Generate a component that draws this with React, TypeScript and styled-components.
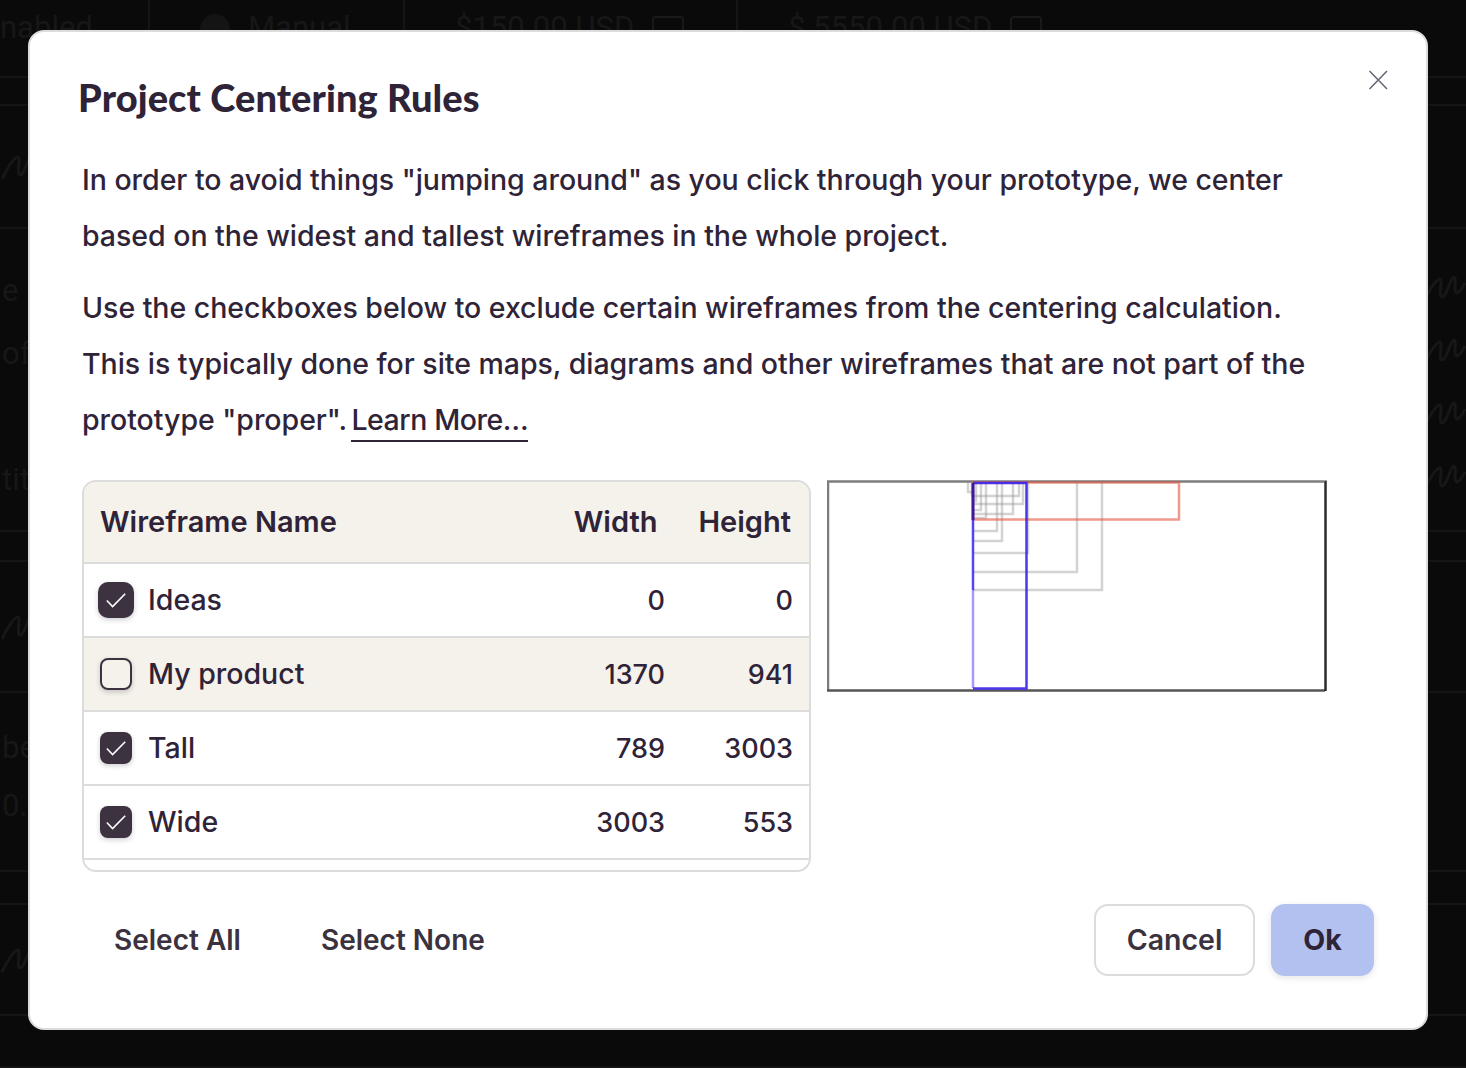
import styled, { createGlobalStyle } from "styled-components";

const TEXT = "#2f2338";
const BUTTON_TEXT = "#3b3240";
const LINE = "#dcdcdc";
const BEIGE = "#f5f1eb";
const GHOST = "#171717";

const wireframes = [
  { name: "Ideas", width: 0, height: 0, checked: true, focused: true },
  { name: "My product", width: 1370, height: 941, checked: false, shaded: true },
  { name: "Tall", width: 789, height: 3003, checked: true },
  { name: "Wide", width: 3003, height: 553, checked: true },
];

// right, bottom of the small grey frames in the preview
const greyFrames = [
  [275, 110],
  [250, 92],
  [201, 73],
  [175, 61],
  [170, 51],
  [159, 38],
  [154, 30],
  [149, 21],
  [145, 15],
  [141, 12],
  [192, 16],
  [196, 24],
  [186, 34],
];

const backgroundRows = [
  { height: 78, top: true },
  { height: 28 },
  { height: 123, pad: 0, lh: 0, scribbles: 1 },
  { height: 303, pad: 30, lh: 63, labels: ["e", "of", "", "tity"], scribbles: 4 },
  { height: 30 },
  { height: 131, scribbles: 1 },
  { height: 179, pad: 26, lh: 58, labels: ["be", "0."] },
  { height: 33 },
  { height: 111, scribbles: 1 },
  { height: 52 },
];

function Scribble() {
  return (
    <svg width="44" height="36" viewBox="0 0 44 36" fill="none">
      <path
        d="M2 30C8 18 14 8 18 8c3 0 -2 18 2 18 5 0 8 -20 12 -20 3 0 -1 16 3 16 3 0 6 -6 8 -10"
        stroke={GHOST}
        strokeWidth="3"
      />
    </svg>
  );
}

function Check() {
  return (
    <svg width="20" height="20" viewBox="0 0 20 20" fill="none">
      <path d="M0.8 10.5L6.6 16.5L19.2 3.8" stroke="#fff" strokeWidth="1.6" />
    </svg>
  );
}

function Preview() {
  return (
    <PreviewFrame width="500" height="212" viewBox="0 0 500 212" fill="none">
      <rect x="0" y="0" width="500" height="212" fill="#fff" />
      <path d="M1 210V1.5H497" stroke="#7d7d7d" strokeWidth="2.5" />
      <path d="M0 210.5H498" stroke="#555" strokeWidth="2.5" />
      <path d="M498.5 0.5V211" stroke="#2b2b2b" strokeWidth="2.5" />
      {greyFrames.map(([r, b]) => (
        <path
          key={`${r}-${b}`}
          d={`M146 ${b}H${r}V2`}
          stroke="#8c8c8c"
          strokeOpacity="0.38"
          strokeWidth="2.5"
        />
      ))}
      <rect x="146" y="2.5" width="206" height="37" stroke="#e2553f" strokeOpacity="0.6" strokeWidth="2.5" />
      <path d="M146 3H199.5V208.5H146" stroke="#3a22f0" strokeOpacity="0.9" strokeWidth="2.5" />
      <path d="M146 3V40" stroke="#3b1a9c" strokeWidth="3" />
      <path d="M146 40V110" stroke="#3a22f0" strokeOpacity="0.85" strokeWidth="2.5" />
      <path d="M146 110V208" stroke="#3a22f0" strokeOpacity="0.45" strokeWidth="2.5" />
    </PreviewFrame>
  );
}

export default function App() {
  return (
    <>
      <GlobalStyle />
      <Backdrop>
        {backgroundRows.map((row, i) => (
          <BackRow key={i} $height={row.height}>
            {row.labels && (
              <BackLabels $pad={row.pad} $lh={row.lh}>
                {row.labels.map((label, j) => (
                  <BackLabel key={j}>{label}</BackLabel>
                ))}
              </BackLabels>
            )}
            {row.top && (
              <>
                <BackLabels $pad={8} $lh={40}>nabled</BackLabels>
                <BackCell $width={255}>
                  <GhostCircle />
                  Manual
                </BackCell>
                <BackCell $width={333}>
                  $150.00 USD
                  <GhostInfo />
                </BackCell>
                <BackCell $width={333}>
                  $ 5550.00 USD
                  <GhostInfo />
                </BackCell>
              </>
            )}
            {!row.labels && row.scribbles && <Scribble />}
            {row.labels && row.scribbles && (
              <RightScribbles>
                {Array.from({ length: row.scribbles }).map((_, j) => (
                  <Scribble key={j} />
                ))}
              </RightScribbles>
            )}
          </BackRow>
        ))}
      </Backdrop>
      <Modal>
        <Title>Project Centering Rules</Title>
        <CloseButton aria-label="Close">
          <svg width="22" height="22" viewBox="0 0 22 22" fill="none">
            <path d="M2.5 2L20 20M20 2L2.5 20" stroke="#6f6776" strokeWidth="1.6" />
          </svg>
        </CloseButton>
        <Paragraph>
          In order to avoid things "jumping around" as you click through your prototype, we center
          <br />
          based on the widest and tallest wireframes in the whole project.
        </Paragraph>
        <Paragraph>
          Use the checkboxes below to exclude certain wireframes from the centering calculation.
          <br />
          This is typically done for site maps, diagrams and other wireframes that are not part of the
          <br />
          prototype "proper". <LearnMore href="#">Learn More…</LearnMore>
        </Paragraph>
        <Content>
          <Table>
            <HeaderRow>
              <HeaderName>Wireframe Name</HeaderName>
              <HeaderWidth>Width</HeaderWidth>
              <HeaderHeight>Height</HeaderHeight>
            </HeaderRow>
            {wireframes.map((w) => (
              <Row key={w.name} $shaded={w.shaded}>
                <NameCell>
                  <CheckSlot>
                    <CheckBox $checked={w.checked} $focused={w.focused}>
                      {w.checked && <Check />}
                    </CheckBox>
                  </CheckSlot>
                  <Name>{w.name}</Name>
                </NameCell>
                <Num>{w.width}</Num>
                <Num>{w.height}</Num>
              </Row>
            ))}
          </Table>
          <Preview />
        </Content>
        <Footer>
          <TextButton>Select All</TextButton>
          <TextButton>Select None</TextButton>
          <Spacer />
          <CancelButton>Cancel</CancelButton>
          <OkButton>Ok</OkButton>
        </Footer>
      </Modal>
    </>
  );
}

const GlobalStyle = createGlobalStyle`
  html, body {
    margin: 0;
    height: 100%;
    background: #0a0a0a;
    overflow: hidden;
  }
  * {
    box-sizing: border-box;
  }
`;

const Backdrop = styled.div`
  height: 1068px;
  background: #0a0a0a;
  overflow: hidden;
  font-family: "Roboto", sans-serif;
  font-size: 31px;
  color: ${GHOST};
`;

const BackRow = styled.div<{ $height: number }>`
  height: ${(p) => p.$height}px;
  border-bottom: 2px solid #151515;
  display: flex;
  align-items: center;
  justify-content: flex-start;
  position: relative;
`;

const BackLabels = styled.div<{ $pad?: number; $lh?: number }>`
  width: 148px;
  height: 100%;
  flex: none;
  padding-top: ${(p) => p.$pad ?? 0}px;
  line-height: ${(p) => p.$lh ?? 40}px;
`;

const BackLabel = styled.div`
  height: 1lh;
  padding-left: 2px;
`;

const BackCell = styled.div<{ $width: number }>`
  width: ${(p) => p.$width}px;
  height: 100%;
  padding: 8px 0 0 50px;
  border-left: 2px solid #151515;
  display: flex;
  align-items: flex-start;
  gap: 18px;
  line-height: 40px;
  white-space: nowrap;
`;

const GhostCircle = styled.span`
  flex: none;
  width: 30px;
  height: 30px;
  margin-top: 6px;
  border-radius: 50%;
  background: #141414;
`;

const GhostInfo = styled.span`
  flex: none;
  width: 32px;
  height: 30px;
  margin-top: 8px;
  border: 2px solid #1a1a1a;
  border-radius: 4px;
`;

const RightScribbles = styled.div`
  margin-left: auto;
  height: 100%;
  padding-top: 42px;
  display: flex;
  flex-direction: column;
  gap: 27px;
`;

const Modal = styled.div`
  position: absolute;
  left: 28px;
  top: 30px;
  width: 1400px;
  height: 1000px;
  padding: 42px 52px 0;
  background: #fff;
  border: 2px solid ${LINE};
  border-radius: 16px;
  font-family: "Inter", "Noto Sans", sans-serif;
  color: ${TEXT};
`;

const Title = styled.h1`
  margin: 0 0 32px -4px;
  font-family: "Lato", sans-serif;
  font-size: 38px;
  line-height: 46px;
  font-weight: 900;
  letter-spacing: 0.1px;
`;

const CloseButton = styled.button`
  position: absolute;
  right: 37px;
  top: 37px;
  width: 22px;
  height: 22px;
  padding: 0;
  border: 0;
  background: none;
  display: flex;
`;

const Paragraph = styled.p`
  margin: 0 0 16px;
  font-size: 28.5px;
  line-height: 56px;
  font-weight: 450;
  letter-spacing: -0.03px;
  white-space: nowrap;
`;

const LearnMore = styled.a`
  color: ${TEXT};
  text-decoration: none;
  border-bottom: 2px solid ${TEXT};
  padding-bottom: 3px;
  margin-left: -3px;
  letter-spacing: -0.45px;
`;

const Content = styled.div`
  display: flex;
  align-items: flex-start;
  gap: 16px;
  margin-top: 32px;
`;

const Table = styled.div`
  width: 729px;
  height: 392px;
  border: 2px solid ${LINE};
  border-radius: 14px;
  overflow: hidden;
`;

const HeaderRow = styled.div`
  height: 82px;
  background: ${BEIGE};
  border-bottom: 2px solid ${LINE};
  display: flex;
  align-items: center;
  padding-bottom: 2px;
  font-size: 29px;
  font-weight: 600;
`;

const HeaderName = styled.div`
  flex: 1;
  padding-left: 16px;
`;

const HeaderWidth = styled.div`
  padding-right: 41px;
`;

const HeaderHeight = styled.div`
  padding-right: 18px;
`;

const Row = styled.div<{ $shaded?: boolean }>`
  height: 74px;
  background: ${(p) => (p.$shaded ? BEIGE : "#fff")};
  border-bottom: 2px solid ${LINE};
  display: grid;
  grid-template-columns: 1fr 128px 128px;
  align-items: center;
  font-size: 28.5px;
  font-weight: 450;
  padding-right: 16px;
`;

const NameCell = styled.div`
  display: flex;
  align-items: center;
  gap: 16px;
  padding-left: 16px;
`;

const Name = styled.span`
  padding-bottom: 2px;
`;

const CheckSlot = styled.div`
  width: 32px;
  display: flex;
  justify-content: center;
`;

const CheckBox = styled.div<{ $checked?: boolean; $focused?: boolean }>`
  flex: none;
  width: ${(p) => (p.$focused ? 36 : 32)}px;
  height: ${(p) => (p.$focused ? 36 : 32)}px;
  border-radius: ${(p) => (p.$focused ? 10 : 8)}px;
  background: ${(p) => (p.$checked ? "#3d3340" : "#fff0")};
  border: ${(p) => (p.$checked ? "0" : `2px solid #3d3340`)};
  box-shadow: 0 2px 5px rgba(40, 30, 50, 0.22);
  display: flex;
  align-items: center;
  justify-content: center;
`;

const Num = styled.div`
  text-align: right;
  font-size: 27px;
`;

const PreviewFrame = styled.svg`
  display: block;
  flex: none;
  filter: blur(0.4px);
`;

const Footer = styled.div`
  display: flex;
  align-items: center;
  margin-top: 32px;
  height: 72px;
`;

const TextButton = styled.button`
  height: 72px;
  padding: 0 32px;
  margin-right: 16px;
  border: 0;
  background: none;
  color: ${BUTTON_TEXT};
  font-family: inherit;
  font-size: 28px;
  font-weight: 600;
`;

const Spacer = styled.div`
  flex: 1;
`;

const CancelButton = styled.button`
  width: 161px;
  height: 72px;
  margin-right: 16px;
  padding: 0 0 2px;
  border: 2px solid ${LINE};
  border-radius: 14px;
  background: #fff;
  color: ${BUTTON_TEXT};
  font-family: inherit;
  font-size: 28.5px;
  font-weight: 600;
`;

const OkButton = styled.button`
  width: 103px;
  height: 72px;
  padding: 0 0 2px;
  border: 0;
  border-radius: 14px;
  background: #b3c1f0;
  box-shadow: 0 2px 6px rgba(40, 30, 50, 0.12);
  color: ${TEXT};
  font-family: inherit;
  font-size: 28.5px;
  font-weight: 700;
`;
